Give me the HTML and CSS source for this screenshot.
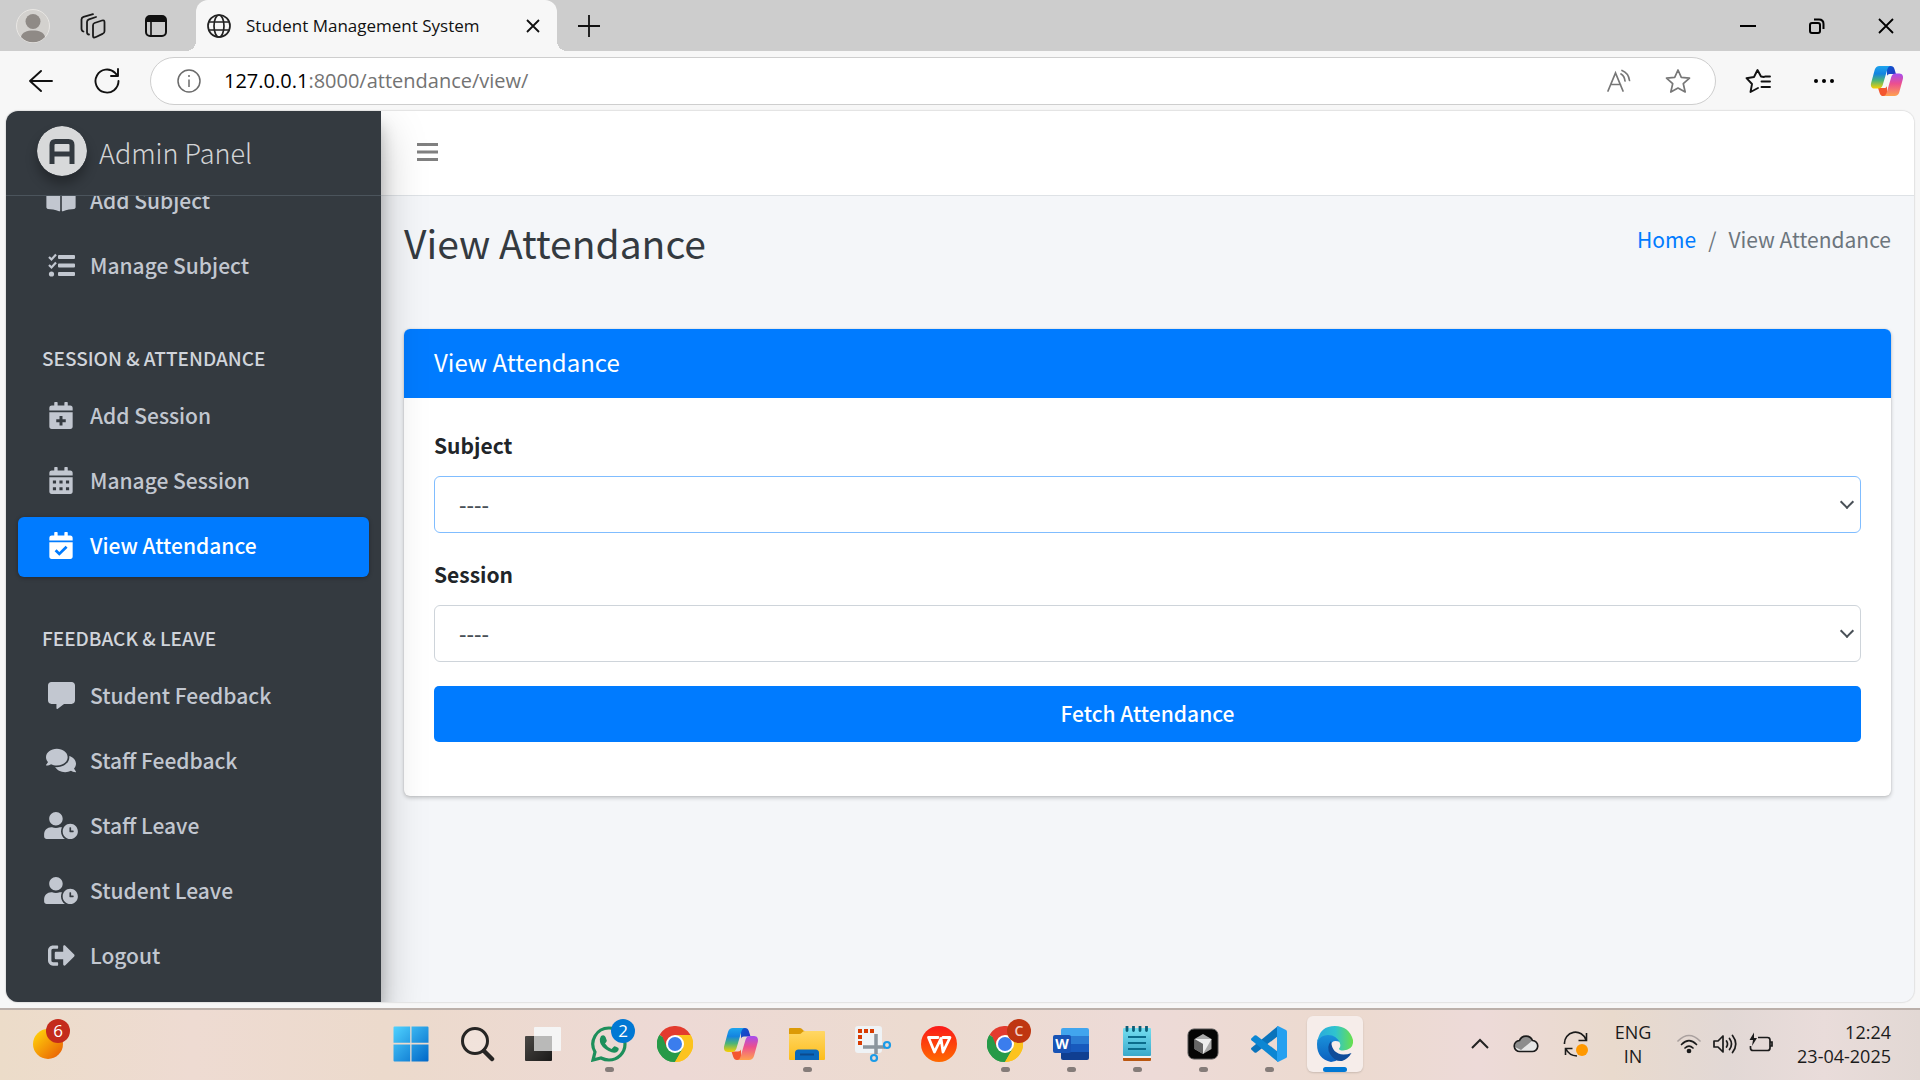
FILE: index.html
```html
<!DOCTYPE html>
<html lang="en">
<head>
<meta charset="utf-8">
<title>Student Management System</title>
<link rel="stylesheet" href="styles.css">
</head>
<body>
<svg class="defs" aria-hidden="true">
  <defs>
    <linearGradient id="cpA" x1="0" y1="0" x2="0" y2="1"><stop offset="0" stop-color="#1ea5ee"/><stop offset=".35" stop-color="#1484e0"/><stop offset=".65" stop-color="#4fb575"/><stop offset="1" stop-color="#fbd000"/></linearGradient>
    <linearGradient id="cpB" x1="0" y1="0" x2="0" y2="1"><stop offset="0" stop-color="#a54df0"/><stop offset=".45" stop-color="#ec4f8f"/><stop offset="1" stop-color="#ffa34f"/></linearGradient>
    <linearGradient id="cpC" x1="0" y1="0" x2="1" y2="1"><stop offset="0" stop-color="#0a5bd0"/><stop offset="1" stop-color="#2733c0"/></linearGradient>
    <linearGradient id="win" x1="0" y1="0" x2="1" y2="1"><stop offset="0" stop-color="#4fd2ff"/><stop offset="1" stop-color="#0067c8"/></linearGradient>
    <linearGradient id="folder" x1="0" y1="0" x2="0" y2="1"><stop offset="0" stop-color="#ffd765"/><stop offset="1" stop-color="#fdbd1b"/></linearGradient>
    <linearGradient id="wps" x1="0" y1="0" x2="0" y2="1"><stop offset="0" stop-color="#fb1a1a"/><stop offset="1" stop-color="#ff6a00"/></linearGradient>
    <linearGradient id="note" x1="0" y1="0" x2="0" y2="1"><stop offset="0" stop-color="#74def0"/><stop offset="1" stop-color="#3aa9cb"/></linearGradient>
    <linearGradient id="edgeTop" x1="0" y1="0" x2="1" y2="0"><stop offset="0" stop-color="#2aa9dd"/><stop offset=".5" stop-color="#2fc3cf"/><stop offset="1" stop-color="#69e04b"/></linearGradient>
    <linearGradient id="edgeMid" x1="0" y1="0" x2="0" y2="1"><stop offset="0" stop-color="#1b96dd"/><stop offset="1" stop-color="#0c5fbe"/></linearGradient>
    <linearGradient id="sun" x1="0" y1="0" x2="1" y2="1"><stop offset=".1" stop-color="#ffcf0a"/><stop offset=".9" stop-color="#ea6405"/></linearGradient>
    <linearGradient id="tvBack" x1="0" y1="0" x2="1" y2="1"><stop offset="0" stop-color="#4a4845"/><stop offset="1" stop-color="#1b1a19"/></linearGradient>
    <symbol id="copilot" viewBox="0 0 36 36">
      <path fill="url(#cpC)" d="M18 2h4c2 0 3.200 1 3.800 3L27.500 10.500H23c-3 0-4 0-5 2z"/>
      <path fill="#f4562f" d="M18 34h-4c-2 0-3-1-3.700-3L8.500 25.500H13c3 0 4 0 5-2z"/>
      <path fill="url(#cpA)" d="M10 2h12c-2 0-3 1.500-3.600 3.500l-5 17C12.500 25 11 26 9 26H5c-3.500 0-4.600-3-3.800-6L5 6c.8-2.600 2.500-4 5-4z"/>
      <path fill="url(#cpB)" d="M26 34H14c2 0 3-1.500 3.600-3.500l5-17c.8-2.500 2.400-3.500 4.400-3.500h4c3.500 0 4.600 3 3.800 6L31 30c-.8 2.600-2.500 4-5 4z"/>
    </symbol>
    <symbol id="chrome" viewBox="0 0 36 36">
      <path fill="#e33b2e" d="M18 18 2.400 9A18 18 0 0 1 33.600 9z"/>
      <path fill="#fcc31e" d="M18 18 33.600 9A18 18 0 0 1 18 36z"/>
      <path fill="#269a48" d="M18 18v18A18 18 0 0 1 2.400 9z"/>
      <path fill="#e33b2e" d="M18 9h15.600L18 2 4 7l6.200 15.500z"/>
      <path fill="#269a48" d="M10.200 22.500 2.400 9A18 18 0 0 0 18 36l7.800-13.500z"/>
      <path fill="#fcc31e" d="M33.600 9H18l7.800 13.500L18 36A18 18 0 0 0 33.600 9z"/>
      <circle cx="18" cy="18" r="9" fill="#fff"/><circle cx="18" cy="18" r="7" fill="#3b7ded"/>
    </symbol>
    <symbol id="calbase" viewBox="0 0 448 512">
      <path d="M0 464c0 26.500 21.500 48 48 48h352c26.500 0 48-21.500 48-48V192H0zM400 64h-48V12c0-6.600-5.400-12-12-12h-40c-6.600 0-12 5.400-12 12v52H160V12c0-6.600-5.400-12-12-12h-40c-6.600 0-12 5.400-12 12v52H48C21.500 64 0 85.500 0 112v48h448v-48c0-26.500-21.500-48-48-48z"/>
    </symbol>
    <symbol id="userclock" viewBox="0 0 640 512">
      <path d="M496 224c-79.600 0-144 64.400-144 144s64.400 144 144 144 144-64.400 144-144-64.400-144-144-144zm64 150.300c0 5.300-4.400 9.700-9.700 9.700h-60.600c-5.300 0-9.700-4.400-9.700-9.700v-76.600c0-5.300 4.400-9.700 9.700-9.700h12.600c5.300 0 9.700 4.400 9.700 9.700V352h38.300c5.300 0 9.700 4.400 9.700 9.700zM320 368c0-27.800 6.700-54.100 18.200-77.500-8-1.500-16.200-2.500-24.600-2.500h-16.700c-22.200 10.200-46.900 16-72.900 16s-50.600-5.800-72.900-16h-16.700C60.200 288 0 348.200 0 422.400V464c0 26.500 21.500 48 48 48h347.100c-45.300-31.900-75.100-84.500-75.100-144zm-96-112c70.700 0 128-57.300 128-128S294.700 0 224 0 96 57.300 96 128s57.300 128 128 128z"/>
    </symbol>
  </defs>
</svg>

<div class="screen">
  <header class="titlebar">
    <div class="titlebar-tools">
      <button class="icon-btn" aria-label="Profile"><svg width="34" height="34" viewBox="0 0 34 34"><circle cx="17" cy="17" r="16.500" fill="#d3d1ce" stroke="#e8e6e3"/><circle cx="17" cy="12.500" r="7.500" fill="#8f8a86"/><path fill="#8f8a86" d="M5 28c1-5 6-6.500 12-6.500S28 23 29 28c-6 7-18 7-24 0z"/></svg></button>
      <button class="icon-btn" aria-label="Workspaces"><svg width="26" height="26" viewBox="0 0 26 26" fill="none" stroke="#1a1a1a" stroke-width="1.800" stroke-linejoin="round" stroke-linecap="round"><path d="M14.500 10 22 7.500q2.500-.7 2.500 1.700v9q0 2-2 2.700l-7 3.300q-2.500 1-2.500-1.200V12.500q0-2 1.500-2.500z"/><path d="M9 21.500Q7 21.500 7 19V9q0-2 2-2.700L16 4"/><path d="M3.500 18.500Q1.500 18 1.500 15.500V6.500q0-2 2-2.700L13 1.200"/></svg></button>
      <button class="icon-btn" aria-label="Tab actions"><svg width="24" height="24" viewBox="0 0 24 24"><rect x="2" y="2" width="20" height="20" rx="4" fill="none" stroke="#111" stroke-width="2"/><path d="M2 8V5q0-3 4-3h12q4 0 4 3v3z" fill="#111"/><path d="M7 8v13" stroke="#111" stroke-width="1.600"/></svg></button>
    </div>
    <div class="tab">
      <svg width="24" height="24" viewBox="0 0 24 24" fill="none" stroke="#222" stroke-width="1.700"><circle cx="12" cy="12" r="11"/><ellipse cx="12" cy="12" rx="5" ry="11"/><path d="M2 8h20M2 16h20"/></svg>
      <span class="tab-title">Student Management System</span>
      <button class="icon-btn tab-close" aria-label="Close tab"><svg width="14" height="14" viewBox="0 0 14 14" stroke="#111" stroke-width="1.800"><path d="M1 1l12 12M13 1 1 13"/></svg></button>
    </div>
    <button class="icon-btn new-tab" aria-label="New tab"><svg width="22" height="22" viewBox="0 0 22 22" stroke="#111" stroke-width="1.800"><path d="M11 0v22M0 11h22"/></svg></button>
    <div class="window-buttons">
      <button class="icon-btn" aria-label="Minimize"><svg width="16" height="16" viewBox="0 0 16 16"><path d="M0 8h16" stroke="#000" stroke-width="2"/></svg></button>
      <button class="icon-btn" aria-label="Restore"><svg width="16" height="16" viewBox="0 0 16 16" fill="none" stroke="#000" stroke-width="2"><rect x="1" y="5" width="10" height="10" rx="2"/><path d="M5 1.500h5q4.500 0 4.500 4.500v5"/></svg></button>
      <button class="icon-btn" aria-label="Close"><svg width="16" height="16" viewBox="0 0 16 16" stroke="#000" stroke-width="1.800"><path d="M1 1l14 14M15 1 1 15"/></svg></button>
    </div>
  </header>

  <div class="toolbar">
    <button class="icon-btn" aria-label="Back"><svg width="24" height="24" viewBox="0 0 24 24" fill="none" stroke="#111" stroke-width="1.900" stroke-linecap="round" stroke-linejoin="round"><path d="M12 2 1 12l11 10M1 12h22"/></svg></button>
    <button class="icon-btn" aria-label="Refresh"><svg width="26" height="26" viewBox="0 0 26 26" fill="none" stroke="#111" stroke-width="1.900" stroke-linecap="round" stroke-linejoin="round"><path d="M24.500 13A11.500 11.500 0 1 1 21 4.800l3 3.200M24 1v7h-7"/></svg></button>
    <div class="address">
      <svg width="24" height="24" viewBox="0 0 24 24" fill="none" stroke="#6b6b6b" stroke-width="1.500"><circle cx="12" cy="12" r="11"/><path d="M12 10.500V18"/><circle cx="12" cy="7" r="1" fill="#6b6b6b" stroke="none"/></svg>
      <span class="url"><b>127.0.0.1</b>:8000/attendance/view/</span>
      <button class="icon-btn" aria-label="Read aloud"><svg width="24" height="24" viewBox="0 0 24 24" fill="none" stroke="#777" stroke-width="1.700" stroke-linecap="round"><path d="M1 22 8.500 4 16 22M4 15.500h9.500"/><path d="M14 5q3.500 2 4 7M15 1.500q6.500 2.500 7.500 10"/></svg></button>
      <button class="icon-btn" aria-label="Add to favorites"><svg width="26" height="26" viewBox="0 0 26 26" fill="none" stroke="#777" stroke-width="1.700" stroke-linejoin="round"><path d="M13 2l3.300 7.300 8.200.8-6.200 5.600 1.900 8.300L13 20l-7.200 4 1.900-8.300L1.500 10.100l8.200-.8z"/></svg></button>
    </div>
    <button class="icon-btn" aria-label="Favorites"><svg width="26" height="26" viewBox="0 0 26 26" fill="none" stroke="#111" stroke-width="1.900" stroke-linejoin="round" stroke-linecap="round"><path d="M19 9l-3-.5L12.500 2 9 9l-7.500 1.200L7 16l-1.500 8L13 20M16.500 13.500h8.500M16.500 19h8.500M20 8.500h5"/></svg></button>
    <button class="icon-btn" aria-label="Settings and more"><svg width="22" height="6" viewBox="0 0 22 6"><circle cx="3" cy="3" r="2"/><circle cx="11" cy="3" r="2"/><circle cx="19" cy="3" r="2"/></svg></button>
    <button class="icon-btn" aria-label="Copilot"><svg width="34" height="34"><use href="#copilot"/></svg></button>
  </div>

  <div class="viewport">
    <aside class="sidebar">
      <a class="brand" href="#">
        <svg class="brand-logo" width="50" height="50" viewBox="0 0 50 50"><circle cx="25" cy="25" r="25" fill="#d8d9da"/><path fill="none" stroke="#343a40" stroke-width="5" stroke-linejoin="round" d="M15 38V19q0-3.500 3.500-3.500h13q3.500 0 3.500 3.500v19M15 28h20"/></svg>
        <span>Admin Panel</span>
      </a>
      <nav class="nav">
        <a class="nav-item" href="#"><span class="nav-icon"><svg width="30" height="26" viewBox="0 0 576 512"><path d="M542.200 32c-54.800 3.100-163.700 14.400-231 55.600-4.600 2.800-7.300 7.900-7.300 13.200v363.900c0 11.600 12.600 18.900 23.300 13.500 69.200-34.800 169.200-44.300 218.700-46.900 16.900-.9 30-14.400 30-30.700V62.800c.1-17.700-15.300-31.800-33.700-30.800zM264.700 87.600C197.500 46.400 88.600 35.200 33.800 32 15.400 31 0 45.100 0 62.800v337.900c0 16.300 13.100 29.800 30 30.700 49.500 2.600 149.600 12.100 218.800 46.900 10.600 5.400 23.200-1.900 23.200-13.500V100.700c0-5.300-2.600-10.300-7.300-13.100z"/></svg></span>Add Subject</a>
        <a class="nav-item" href="#"><span class="nav-icon"><svg width="27" height="27" viewBox="0 0 27 27"><path d="M11 3h15q1 0 1 1v2q0 1-1 1H11q-1 0-1-1V4q0-1 1-1zM11 11.500h15q1 0 1 1v2q0 1-1 1H11q-1 0-1-1v-2q0-1 1-1zM11 20h15q1 0 1 1v2q0 1-1 1H11q-1 0-1-1v-2q0-1 1-1z"/><path d="M1 5l2.500 2.500L8 2.500M1 13l2.500 2.500L8 10.500" fill="none" stroke="currentColor" stroke-width="2.200"/><circle cx="3.500" cy="22" r="2.600"/></svg></span>Manage Subject</a>
        <h2 class="nav-header">SESSION &amp; ATTENDANCE</h2>
        <a class="nav-item" href="#"><span class="nav-icon"><svg width="24" height="27" viewBox="0 0 448 512"><use href="#calbase"/><path class="cut" d="M196 265h56v62h62v56h-62v62h-56v-62h-62v-56h62z"/></svg></span>Add Session</a>
        <a class="nav-item" href="#"><span class="nav-icon"><svg width="24" height="27" viewBox="0 0 448 512"><use href="#calbase"/><path class="cut" d="M70 256h60v56H70zM194 256h60v56h-60zM318 256h60v56h-60zM70 384h60v56H70zM194 384h60v56h-60zM318 384h60v56h-60z"/></svg></span>Manage Session</a>
        <a class="nav-item active" href="#"><span class="nav-icon"><svg width="24" height="27" viewBox="0 0 448 512"><use href="#calbase"/><path class="cut-line" d="M122 345l70 70 138-134"/></svg></span>View Attendance</a>
        <h2 class="nav-header">FEEDBACK &amp; LEAVE</h2>
        <a class="nav-item" href="#"><span class="nav-icon"><svg width="27" height="27" viewBox="0 0 512 512"><path d="M448 0H64C28.700 0 0 28.700 0 64v288c0 35.300 28.700 64 64 64h96v84c0 9.800 11.200 15.500 19.100 9.700L304 416h144c35.300 0 64-28.700 64-64V64c0-35.300-28.700-64-64-64z"/></svg></span>Student Feedback</a>
        <a class="nav-item" href="#"><span class="nav-icon"><svg width="30" height="27" viewBox="0 0 576 512"><path d="M416 192c0-88.400-93.100-160-208-160S0 103.600 0 192c0 34.300 14.100 65.900 38 92-13.400 30.200-35.500 54.200-35.800 54.500-2.200 2.300-2.800 5.700-1.500 8.700S4.800 352 8 352c36.600 0 66.900-12.300 88.700-25 32.200 15.700 70.300 25 111.300 25 114.900 0 208-71.600 208-160zm122 220c23.900-26 38-57.700 38-92 0-66.900-53.500-124.200-129.300-148.100.9 6.600 1.300 13.300 1.300 20.100 0 105.900-107.700 192-240 192-10.800 0-21.300-.8-31.700-1.900C207.800 439.600 281.800 480 368 480c41 0 79.100-9.200 111.300-25 21.800 12.700 52.100 25 88.700 25 3.200 0 6.100-1.900 7.300-4.800 1.300-2.900.7-6.300-1.500-8.700-.3-.3-22.400-24.200-35.800-54.500z"/></svg></span>Staff Feedback</a>
        <a class="nav-item" href="#"><span class="nav-icon"><svg width="34" height="27"><use href="#userclock"/></svg></span>Staff Leave</a>
        <a class="nav-item" href="#"><span class="nav-icon"><svg width="34" height="27"><use href="#userclock"/></svg></span>Student Leave</a>
        <a class="nav-item" href="#"><span class="nav-icon"><svg width="27" height="27" viewBox="0 0 512 512"><path d="M497 273 329 441c-15 15-41 4.500-41-17v-96H152c-13.300 0-24-10.700-24-24v-96c0-13.300 10.700-24 24-24h136V88c0-21.400 25.900-32 41-17l168 168c9.300 9.400 9.300 24.600 0 34zM192 436v-40c0-6.600-5.400-12-12-12H96c-17.700 0-32-14.300-32-32V160c0-17.700 14.300-32 32-32h84c6.600 0 12-5.400 12-12V76c0-6.600-5.400-12-12-12H96c-53 0-96 43-96 96v192c0 53 43 96 96 96h84c6.600 0 12-5.400 12-12z"/></svg></span>Logout</a>
      </nav>
    </aside>

    <div class="page">
      <div class="navbar">
        <button class="icon-btn" aria-label="Toggle menu"><svg width="21" height="18" viewBox="0 0 21 18" fill="#808080"><path d="M0 0h21v3H0zM0 7.500h21v3H0zM0 15h21v3H0z"/></svg></button>
      </div>
      <main class="content">
        <div class="content-head">
          <h1>View Attendance</h1>
          <nav class="breadcrumb"><a href="#">Home</a><span>/</span><span>View Attendance</span></nav>
        </div>
        <section class="card">
          <h3 class="card-title">View Attendance</h3>
          <form class="card-body">
            <label for="subject">Subject</label>
            <div class="select-wrap"><select id="subject" class="focused"><option>----</option></select></div>
            <label for="session">Session</label>
            <div class="select-wrap"><select id="session"><option>----</option></select></div>
            <button class="submit" type="button">Fetch Attendance</button>
          </form>
        </section>
      </main>
    </div>
  </div>

  <footer class="taskbar">
    <div class="widgets">
      <div class="app weather"><svg width="30" height="30" viewBox="0 0 30 30"><circle cx="15" cy="15" r="15" fill="url(#sun)"/></svg><span class="badge red">6</span></div>
    </div>
    <div class="apps">
      <div class="app"><svg width="36" height="36" viewBox="0 0 36 36"><path fill="url(#win)" d="M1.500.5h15.700v16.200H.5V1.500q0-1 1-1zM18.500.5h16q1 0 1 1v15.200h-17zM.5 18.500h16.700v17H1.500q-1 0-1-1zM18.500 18.500h17v16q0 1-1 1h-16z"/></svg></div>
      <div class="app"><svg width="36" height="36" viewBox="0 0 36 36" fill="none" stroke="#262524"><circle cx="16" cy="15" r="12.500" stroke-width="3" fill="#fff" fill-opacity=".25"/><path d="M25 25l8 8" stroke-width="4.500" stroke-linecap="round"/></svg></div>
      <div class="app"><svg width="36" height="36" viewBox="0 0 36 36"><rect x="0" y="10" width="27" height="25" rx="1" fill="url(#tvBack)"/><rect x="9" y="1" width="27" height="24" rx="1" fill="#f5f5f5"/><path d="M9 10h18v15H9z" fill="#b9b9b8"/></svg></div>
      <div class="app running"><svg width="36" height="36" viewBox="0 0 36 36"><path d="M18 2a16 16 0 0 1 0 32q-4 0-8-2l-8 2 2-8A16 16 0 0 1 18 2z" fill="none" stroke="#1d8f5b" stroke-width="3.200"/><path fill="#1d8f5b" d="M10 10q3-2 4.500 1l1.300 3.500q.2 1-1.800 3 2.500 4 6.500 5.500l2.500-2.500q1-.6 4.500 1.500 1 2-1.500 4-3 2-8.500-1Q10 21 9 16q-.5-4 1-6z"/></svg><span class="badge blue">2</span></div>
      <div class="app"><svg width="36" height="36"><use href="#chrome"/></svg></div>
      <div class="app"><svg width="36" height="36"><use href="#copilot"/></svg></div>
      <div class="app running"><svg width="36" height="36" viewBox="0 0 36 36"><path fill="#dc9a06" d="M1 2h10q1.500 0 2.500 1.500T16 5v5H0V3q0-1 1-1z"/><path fill="url(#folder)" d="M0 8h10q2 0 3-1.500T16 5h19q1 0 1 1v27q0 1-1 1H1q-1 0-1-1z"/><path fill="#0a69bd" d="M6 34v-7q0-3.500 3.500-3.500h17q3.500 0 3.500 3.500v7z"/><path d="M11 28.500h14" stroke="#0c4a8c" stroke-width="2"/></svg></div>
      <div class="app"><svg class="overflowing" width="36" height="36" viewBox="0 0 36 36"><rect x="0" y="0" width="27" height="27" rx="3" fill="#eff3f6"/><path d="M5 19V5h15" fill="none" stroke="#d83b01" stroke-width="4" stroke-dasharray="4 2"/><path d="M21 8v20M8 21h22" stroke="#8b959d" stroke-width="3.500" fill="none"/><circle cx="32" cy="19" r="3" fill="none" stroke="#1a9be8" stroke-width="2.200"/><circle cx="19" cy="32" r="3" fill="none" stroke="#1a9be8" stroke-width="2.200"/></svg></div>
      <div class="app"><svg width="36" height="36" viewBox="0 0 36 36"><circle cx="18" cy="18" r="18" fill="url(#wps)"/><path d="M17 11.500H7.500L13.500 26 20 12.500 22 26 29 11.500h-7" fill="none" stroke="#fff" stroke-width="2.800" stroke-linejoin="round" stroke-linecap="round"/></svg></div>
      <div class="app running"><svg width="36" height="36"><use href="#chrome"/></svg><span class="badge rust">C</span></div>
      <div class="app running"><svg width="36" height="36" viewBox="0 0 36 36"><path fill="#41a5ee" d="M10 2h24q2 0 2 2v6H8V4q0-2 2-2z"/><path fill="#2b7cd3" d="M8 10h28v8H8z"/><path fill="#185abd" d="M8 18h28v8H8z"/><path fill="#103f91" d="M8 26h28v6q0 2-2 2H10q-2 0-2-2z"/><rect x="0" y="9" width="18" height="18" rx="2" fill="#1853b5"/><text x="9" y="23" class="word-w">W</text></svg></div>
      <div class="app running"><svg width="36" height="36" viewBox="0 0 36 36"><rect x="4" y="30" width="28" height="5" rx="1" fill="#bb5710"/><path d="M4 30h28v2H4z" fill="#f3f3f3"/><rect x="4" y="2" width="28" height="28" rx="1" fill="url(#note)"/><path d="M9 11h18M9 17h18M9 23h18" stroke="#0b6c8c" stroke-width="2"/><path d="M8 .500v4M14.500.500v4M21 .500v4M27.500.500v4" stroke="#0b5d77" stroke-width="2.800" stroke-linecap="round"/></svg></div>
      <div class="app running"><svg width="36" height="36" viewBox="0 0 36 36"><rect x="3" y="3" width="30" height="30" rx="6" fill="#050505" stroke="#555"/><path fill="#aaa" d="M18 8l8.500 5v10L18 28l-8.500-5V13z"/><path fill="#eee" d="M9.500 13h17L18 28V18z"/><path fill="#666" d="M9.500 13 18 18v10l-8.500-5z"/></svg></div>
      <div class="app running"><svg width="36" height="36" viewBox="0 0 36 36"><path fill="#0a73bb" d="M27 0v10L5.500 26.500q-1 .7-2 0l-3-2.700q-1-1 0-2z"/><path fill="#0c86d3" d="M27 36V26L5.500 9.500q-1-.7-2 0l-3 2.700q-1 1 0 2z"/><path fill="#25a0f0" d="M27 0l8 4q1 .5 1 1.500v25q0 1-1 1.500l-8 4q-1-.5-1-1V1q0-.5 1-1z"/></svg></div>
      <div class="app running current"><svg width="36" height="36" viewBox="0 0 36 36"><path fill="url(#edgeMid)" d="M0 18Q0 8 10 7q13 0 13 9-8-3-9 3-1 8 8 14-4 3-8 3Q0 33 0 18z"/><path fill="url(#edgeTop)" d="M.500 15Q3 0 18 0q14 0 18 14 1 10-10 10.500-4 0-4-2 2-2 1-5Q20 9 11 9 4 9 .500 15z"/><path fill="#0f4c9a" d="M14 15q-5 6-1 13 5 8 12 7 6-2 9.500-8-4 1.500-8 1.500Q15 28 14 15z"/></svg></div>
    </div>
    <div class="tray">
      <svg width="18" height="18" viewBox="0 0 18 18" fill="none" stroke="#222" stroke-width="2"><path d="M1 13l8-8 8 8"/></svg>
      <svg width="26" height="26" viewBox="0 0 26 26"><path d="M7 20.500a5.500 5.500 0 0 1-.5-11 7 7 0 0 1 13 0 5.500 5.500 0 0 1-.5 11z" fill="#e6e6e6"/><path d="M2 16q0-6 4.500-6.500a7 7 0 0 1 13 0L8 19z" fill="#8d8d8d"/><path d="M7 20.500a5.500 5.500 0 0 1-.5-11 7 7 0 0 1 13 0 5.500 5.500 0 0 1-.5 11z" fill="none" stroke="#1b1b1b" stroke-width="1.700"/></svg>
      <svg width="26" height="26" viewBox="0 0 26 26" fill="none" stroke="#1b1b1b" stroke-width="1.600"><path d="M1.500 13a11 11 0 0 1 21.500-4M23.500 2v7.500h-8M2.500 24v-6.500h7M3 18q3 6.500 11 7"/><circle cx="19" cy="19" r="6" fill="#ff9800" stroke="none"/></svg>
      <div class="lang">ENG<br>IN</div>
      <div class="status">
        <svg width="24" height="24" viewBox="0 0 24 24" fill="none" stroke="#1b1b1b" stroke-width="1.700" stroke-linecap="round"><path d="M1 9q11-11 22 0" stroke="#aaa19f"/><path d="M4.500 12.500q7.500-7.500 15 0M8 16q4-4 8 0"/><circle cx="12" cy="19" r="1.500" fill="#1b1b1b"/></svg>
        <svg width="24" height="24" viewBox="0 0 24 24" fill="none" stroke="#1b1b1b" stroke-width="1.700" stroke-linejoin="round" stroke-linecap="round"><path d="M1 9h4l5-5v16l-5-5H1zM13.500 9q2 3 0 6M16.500 6.500q4 5.500 0 11M19.500 3.500q6.500 8.500 0 17"/></svg>
        <svg width="24" height="24" viewBox="0 0 24 24" fill="none" stroke="#1b1b1b" stroke-width="1.700"><path d="M9 5.500h9.500q2.500 0 2.500 2.500v8q0 2.500-2.500 2.500H4q-2.500 0-2.500-2.500v-2M21.500 10h1.500v4h-1.500"/><path d="M5 .500.500 8H4l-1 6 5-8H5z" fill="#1b1b1b" stroke="none"/></svg>
      </div>
      <div class="clock">12:24<br>23-04-2025</div>
    </div>
  </footer>
</div>
</body>
</html>
```
FILE: styles.css
```css
*, *::before, *::after { box-sizing: border-box; }

body {
  margin: 0;
  font-family: "Noto Sans CJK SC", "Open Sans", sans-serif;
  font-size: 21px;
  font-weight: 500;
  line-height: 32px;
  color: #212529;
}

svg { display: block; flex: none; }
a { text-decoration: none; }
h1, h2, h3 { margin: 0; font-weight: 400; }
.defs { position: absolute; width: 0; height: 0; }
.overflowing { overflow: visible; }

.icon-btn {
  display: flex;
  align-items: center;
  justify-content: center;
  padding: 0;
  border: 0;
  background: none;
}

.screen {
  display: flex;
  flex-direction: column;
  height: 100vh;
  background: #f7f7f7;
}

/* Browser window */
.titlebar {
  display: flex;
  align-items: center;
  flex: none;
  height: 51px;
  background: #cdcdcd;
  font-family: "Open Sans", sans-serif;
  font-weight: 400;
}

.titlebar-tools {
  display: flex;
  gap: 32px;
  width: 196px;
  padding-left: 16px;
}
.titlebar-tools .icon-btn + .icon-btn { margin-left: -2px; }
.titlebar-tools .icon-btn + .icon-btn + .icon-btn { margin-left: 6px; }

.tab {
  position: relative;
  display: flex;
  align-items: center;
  width: 361px;
  height: 100%;
  padding: 0 17px 0 11px;
  border-radius: 12px 12px 0 0;
  background: #f7f7f7;
}
.tab::before, .tab::after {
  content: "";
  position: absolute;
  bottom: 0;
  width: 10px;
  height: 10px;
}
.tab::before { right: 100%; background: radial-gradient(circle at 0 0, #cdcdcd 10px, #f7f7f7 10px); }
.tab::after { left: 100%; background: radial-gradient(circle at 100% 0, #cdcdcd 10px, #f7f7f7 10px); }
.tab-title { flex: 1; margin-left: 15px; font-size: 17px; color: #111; white-space: nowrap; }
.new-tab { margin-left: 21px; }

.window-buttons { display: flex; margin-left: auto; }
.window-buttons .icon-btn { width: 69px; }

.toolbar {
  display: flex;
  align-items: center;
  flex: none;
  height: 60px;
  padding: 0 16px 0 8px;
}
.toolbar > .icon-btn { width: 66px; }
.toolbar > .icon-btn:last-child { width: 34px; margin-left: 13px; }

.address {
  display: flex;
  align-items: center;
  flex: 1;
  height: 48px;
  margin: 0 9px 0 10px;
  padding: 0 24px 0 26px;
  border: 1px solid #cecece;
  border-radius: 24px;
  background: #fff;
}
.address .icon-btn + .icon-btn { margin-left: 34px; }
.url {
  flex: 1;
  margin-left: 23px;
  font-family: "Open Sans", sans-serif;
  font-size: 20px;
  font-weight: 400;
  color: #737373;
}
.url b { font-weight: 400; color: #000; }

.viewport {
  display: flex;
  flex: 1;
  min-height: 0;
  margin: 0 6px;
  overflow: hidden;
  border-radius: 12px;
  background: #f4f6f9;
  box-shadow: 0 0 1px 1px #e2e2e2;
}

/* Sidebar */
.sidebar {
  position: relative;
  z-index: 1;
  display: flex;
  flex-direction: column;
  flex: none;
  width: 375px;
  background: #343a40;
  box-shadow: 0 21px 42px rgba(0, 0, 0, .25), 0 15px 15px rgba(0, 0, 0, .22);
}

.brand {
  display: flex;
  align-items: center;
  gap: 12px;
  flex: none;
  height: 85px;
  padding: 0 31px;
  border-bottom: 1px solid #4b545c;
  color: rgba(255, 255, 255, .8);
  font-size: 27px;
  font-weight: 300;
}
.brand-logo { margin-bottom: 4px; border-radius: 50%; box-shadow: 0 8px 12px rgba(0, 0, 0, .3); }

.nav {
  display: flex;
  flex-direction: column;
  justify-content: flex-end;
  flex: 1;
  min-height: 0;
  overflow: hidden;
  padding: 0 12px 15px;
}

.nav-item {
  display: flex;
  align-items: center;
  flex: none;
  height: 60px;
  margin-top: 5px;
  padding: 0 24px 4px;
  border-radius: 6px;
  color: #c2c7d0;
}
.nav-icon {
  display: flex;
  justify-content: center;
  width: 38px;
  margin-right: 10px;
}
.nav-icon svg { fill: currentColor; }
.nav-icon .cut { fill: #343a40; }
.nav-icon .cut-line { fill: none; stroke: #007bff; stroke-width: 52; }
.nav-item.active {
  background: #007bff;
  color: #fff;
  box-shadow: 0 1px 4px rgba(0, 0, 0, .3);
}

.nav-header {
  flex: none;
  padding: 45px 24px 8px;
  color: #d0d4db;
  font-size: 19px;
  font-weight: 500;
}

/* Page */
.page { flex: 1; min-width: 0; }

.navbar {
  display: flex;
  align-items: center;
  height: 85px;
  padding: 0 36px 2px;
  border-bottom: 1px solid #dee2e6;
  background: #fff;
}

.content { padding: 23px; }

.content-head {
  display: flex;
  align-items: flex-start;
  justify-content: space-between;
  margin-bottom: 63px;
}
.content-head h1 { color: #343a40; font-size: 39px; line-height: 47px; }
.breadcrumb { display: flex; gap: 12px; padding-top: 4px; color: #6c757d; font-weight: 400; }
.breadcrumb a { color: #007bff; }

.card {
  border-radius: 6px;
  background: #fff;
  box-shadow: 0 0 2px rgba(0, 0, 0, .13), 0 2px 4px rgba(0, 0, 0, .2);
}
.card-title {
  padding: 17px 30px 20px;
  border-radius: 6px 6px 0 0;
  background: #007bff;
  color: #fff;
  font-size: 24px;
}
.card-body {
  display: flex;
  flex-direction: column;
  padding: 31px 30px 54px;
}
.card-body label { margin-bottom: 15px; font-weight: 700; }

.select-wrap { position: relative; margin-bottom: 24px; }
.select-wrap:first-of-type { margin-bottom: 25px; }
.select-wrap::after {
  content: "";
  position: absolute;
  top: 21px;
  right: 9px;
  width: 10px;
  height: 10px;
  border: solid #495057;
  border-width: 0 2px 2px 0;
  transform: rotate(45deg);
  pointer-events: none;
}
select {
  display: block;
  width: 100%;
  height: 57px;
  padding: 0 24px 2px;
  border: 1px solid #ced4da;
  border-radius: 6px;
  outline: 0;
  appearance: none;
  background: #fff;
  color: #495057;
  font: inherit;
}
select.focused { border-color: #80bdff; }

.submit {
  height: 56px;
  padding: 0 0 2px;
  border: 0;
  border-radius: 5px;
  background: #007bff;
  color: #fff;
  font: inherit;
}

/* Taskbar */
.taskbar {
  display: flex;
  align-items: center;
  flex: none;
  height: 72px;
  margin-top: 6px;
  padding-bottom: 2px;
  border-top: 2px solid #bbb0aa;
  background: linear-gradient(90deg, #ecdcc9, #eedbd2 10%, #ecdacc 20%, #edd9d5 35%, #ecdbd0 48%, #eddad7 60%, #ecdacf 70%, #eddad8 77%, #e9dacd 84%, #e2d8d5 90%, #e9dcda 95%, #e2d8d4);
  font-family: "Open Sans", sans-serif;
  font-size: 18px;
  font-weight: 400;
  line-height: 24px;
  color: #1b1b1b;
}

.widgets { width: 378px; padding-left: 20px; }
.apps { display: flex; }

.app {
  position: relative;
  display: flex;
  align-items: center;
  justify-content: center;
  width: 56px;
  height: 56px;
  margin: 0 5px;
  border-radius: 6px;
}
.weather { margin: 0; }
.app.running::after {
  content: "";
  position: absolute;
  bottom: 0;
  left: 50%;
  width: 9px;
  height: 5px;
  margin-left: -4px;
  border-radius: 3px;
  background: #857c79;
}
.app.current { background: #f6edea; box-shadow: 0 1px 2px rgba(0, 0, 0, .15); }
.app.current::after { width: 24px; margin-left: -12px; background: #0078d4; }

.badge {
  position: absolute;
  top: 3px;
  right: 2px;
  width: 24px;
  height: 24px;
  border-radius: 50%;
  color: #fff;
  font-size: 17px;
  text-align: center;
}
.badge.blue { background: #0078d4; }
.badge.red { right: 6px; background: #c42b1c; }
.badge.rust { background: #bf3610; font-size: 14px; font-weight: 600; color: #f3cfc4; }
.word-w { fill: #fff; font-size: 14px; font-weight: 700; text-anchor: middle; }

.tray {
  display: flex;
  align-items: center;
  flex: 1;
  justify-content: flex-end;
  gap: 24px;
  padding-right: 29px;
}
.lang { width: 40px; text-align: center; }
.status { display: flex; gap: 12px; }
.clock { text-align: right; white-space: nowrap; }
```
